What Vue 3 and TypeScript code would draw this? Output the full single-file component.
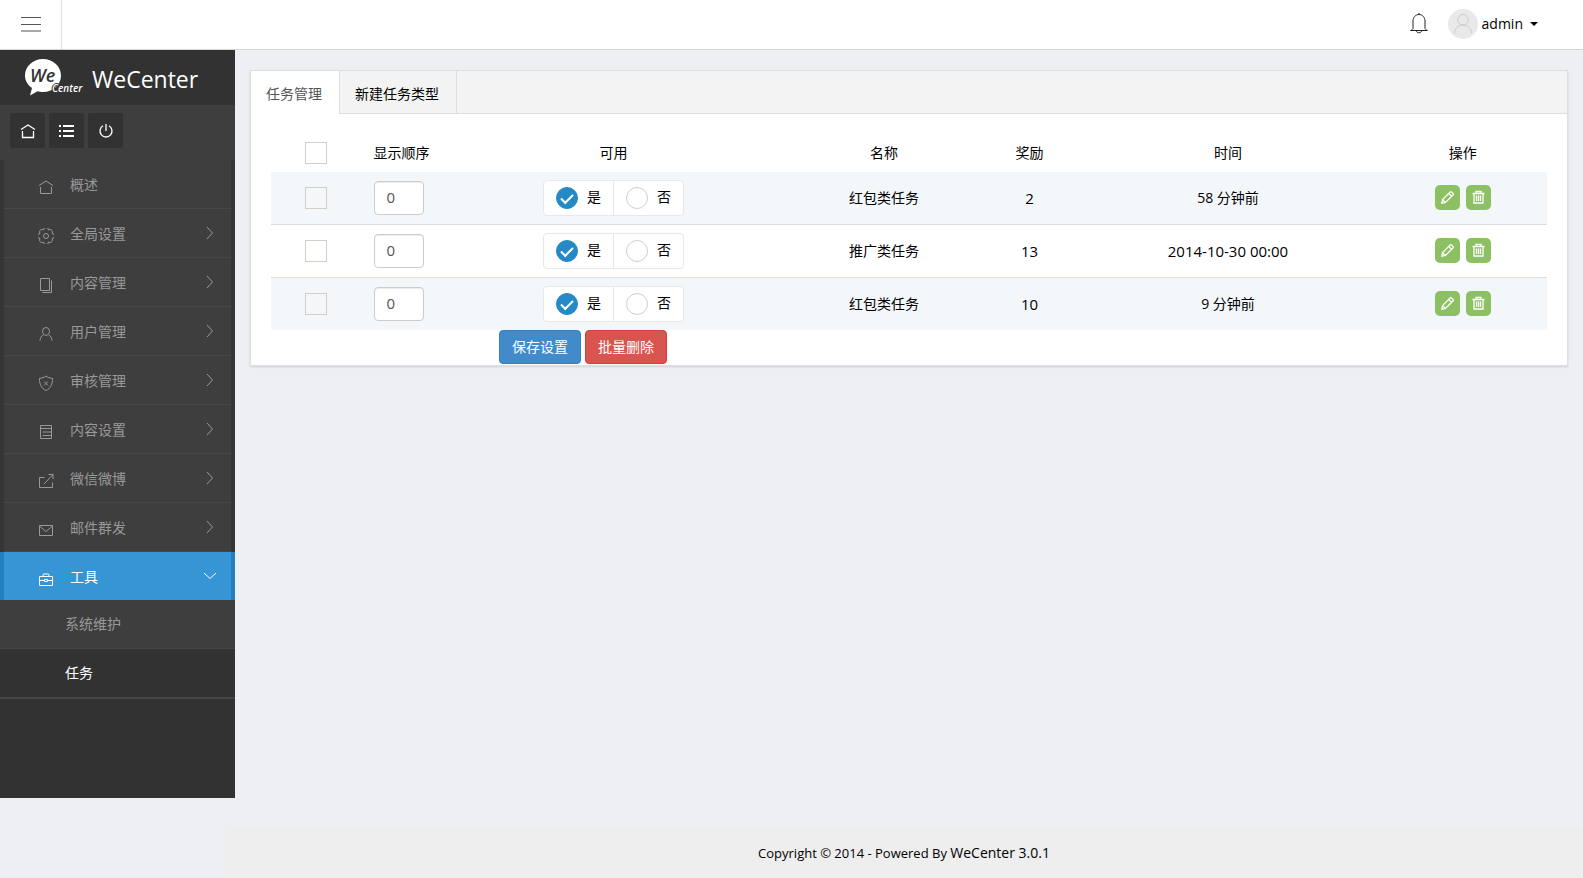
<script setup lang="ts">
import { ref } from 'vue'

interface MenuItem {
  label: string
  icon: string
  expandable: boolean
}

interface Task {
  id: number
  order: string
  enabled: 'yes' | 'no'
  name: string
  reward: string
  time: string
  checked: boolean
}

const icons: Record<string, string> = {
  home: 'M1 6.5 8 2l7 4.5M2.5 8v6.5h11V8',
  gear: 'M14 10.5A2.5 2.5 0 0 1 10.5 14A2.5 2.5 0 0 1 5.500 14A2.500 2.500 0 0 1 2 10.500A2.500 2.500 0 0 1 2 5.500A2.500 2.500 0 0 1 5.500 2A2.500 2.500 0 0 1 10.500 2A2.500 2.500 0 0 1 14 5.500A2.500 2.500 0 0 1 14 10.500zM8 5.500a2.500 2.500 0 1 0 0 5 2.500 2.500 0 1 0 0-5z',
  pages: 'M2.500 1.500h9v12h-9zM13.500 3.500v12h-9',
  user: 'M8 1.500a3.500 3.800 0 0 1 3.500 3.800c0 2-1.500 4-3.500 4s-3.500-2-3.500-4A3.500 3.800 0 0 1 8 1.500zM5.500 8.800c-2 1-3.500 3-3.500 6M10.500 8.800c2 1 3.500 3 3.500 6',
  shield: 'M8 1c1.800 1.500 4 2.200 6.500 2.300C14.800 9 12.500 13.500 8 15.500 3.500 13.500 1.200 9 1.500 3.300 4 3.200 6.200 2.500 8 1zM6 6.500l4 4M10 6.500l-4 4',
  list: 'M2.500 1.500h11v13h-11zM2.500 4.500h11M4.500 8h9M4.500 11.500h9',
  share: 'M6.500 4.500h-5v10h13v-5M6 11l9-9.500M10.500 1.500h4.500v4.500',
  mail: 'M1.500 3.500h13v10h-13zM1.500 4l6.500 5.500L14.500 4',
  toolbox: 'M1.500 5.500h13v9h-13zM4.500 5.500l1-2.500h5l1 2.500M1.500 9.500h4.500M10 9.500h4.500M6.500 8.500h3v2h-3z',
}

const menu: MenuItem[] = [
  { label: '概述', icon: 'home', expandable: false },
  { label: '全局设置', icon: 'gear', expandable: true },
  { label: '内容管理', icon: 'pages', expandable: true },
  { label: '用户管理', icon: 'user', expandable: true },
  { label: '审核管理', icon: 'shield', expandable: true },
  { label: '内容设置', icon: 'list', expandable: true },
  { label: '微信微博', icon: 'share', expandable: true },
  { label: '邮件群发', icon: 'mail', expandable: true },
]

const tasks = ref<Task[]>([
  { id: 1, order: '0', enabled: 'yes', name: '红包类任务', reward: '2', time: '58 分钟前', checked: false },
  { id: 2, order: '0', enabled: 'yes', name: '推广类任务', reward: '13', time: '2014-10-30 00:00', checked: false },
  { id: 3, order: '0', enabled: 'yes', name: '红包类任务', reward: '10', time: '9 分钟前', checked: false },
])

const allChecked = ref(false)

function toggleAll(): void {
  tasks.value.forEach((task) => {
    task.checked = allChecked.value
  })
}

function isNumeric(text: string): boolean {
  return /^[\d\s:-]+$/.test(text)
}
</script>

<template>
  <div class="page">
    <header class="topbar">
      <button class="toggle" type="button" aria-label="切换菜单">
        <svg width="20" height="16" viewBox="0 0 20 16"><path d="M0 1.500h20M0 8.500h20M0 15h20" /></svg>
      </button>
      <div class="account">
        <button class="bell" type="button" aria-label="通知">
          <svg width="18" height="22" viewBox="0 0 18 22">
            <path d="M9 1v2M.5 18.500h17M1 18.500l2-2V9c0-3.700 2.600-6.500 6-6.500s6 2.800 6 6.500v7.500l2 2M6.500 19c.3 2.300 4.700 2.300 5 0" />
          </svg>
        </button>
        <a class="profile" href="#profile">
          <svg class="avatar" width="30" height="30" viewBox="0 0 30 30">
            <circle cx="15" cy="15" r="15" />
            <path d="M15 5.500a5 5 0 1 1 0 10.500 5 5 0 1 1 0-10.500zM6.500 24.500c0-5 3.500-8.500 8.500-8.500s8.500 3.500 8.500 8.500" />
          </svg>
          <span>admin</span>
          <i class="caret"></i>
        </a>
      </div>
    </header>

    <div class="body">
      <aside class="sidebar">
        <a class="brand" href="#home">
          <svg width="58" height="38" viewBox="0 0 58 38">
            <path d="M18 0C27.500 0 36 7 36 16.500S28 33 18 33c-2 0-4-.3-5.500-.8L5 36.500l2-7.500C2.500 26 0 21.500 0 16.500 0 7 8.500 0 18 0z" fill="#fff" />
            <text class="logo-we" x="5" y="23">We</text>
            <text class="logo-center" x="27" y="33">Center</text>
          </svg>
          <span>WeCenter</span>
        </a>

        <div class="tools">
          <a href="#home" aria-label="首页">
            <svg width="16" height="16" viewBox="0 0 16 16"><path :d="icons.home" /></svg>
          </a>
          <a href="#list" aria-label="列表">
            <svg class="bold" width="16" height="16" viewBox="0 0 16 16"><path d="M0 3h2M4 3h11M0 8h2M4 8h11M0 13h2M4 13h11" /></svg>
          </a>
          <a href="#logout" aria-label="退出">
            <svg width="16" height="16" viewBox="0 0 16 16"><path d="M8 1v7M5 2.800a6 6 0 1 0 6 0" /></svg>
          </a>
        </div>

        <nav>
          <a v-for="item in menu" :key="item.label" class="item" href="#menu">
            <svg class="glyph" width="16" height="16" viewBox="0 0 16 16"><path :d="icons[item.icon]" /></svg>
            <span>{{ item.label }}</span>
            <svg v-if="item.expandable" class="chevron" width="14" height="14" viewBox="0 0 14 14"><path d="M4 1l5.500 6L4 13" /></svg>
          </a>
          <a class="item active" href="#tools">
            <svg class="glyph" width="16" height="16" viewBox="0 0 16 16"><path :d="icons.toolbox" /></svg>
            <span>工具</span>
            <svg class="chevron" width="14" height="14" viewBox="0 0 14 14"><path d="M1 4l6 5.500L13 4" /></svg>
          </a>
          <div class="submenu">
            <a href="#maintain">系统维护</a>
            <a class="current" href="#task">任务</a>
          </div>
        </nav>
      </aside>

      <main class="content">
        <section class="card">
          <div class="tabs">
            <a class="tab selected" href="#manage">任务管理</a>
            <a class="tab" href="#create">新建任务类型</a>
          </div>
          <form class="panel" @submit.prevent>
            <table>
              <colgroup>
                <col class="c-check" />
                <col class="c-order" />
                <col class="c-enabled" />
                <col class="c-name" />
                <col class="c-reward" />
                <col class="c-time" />
                <col class="c-action" />
              </colgroup>
              <thead>
                <tr>
                  <th><input v-model="allChecked" class="tick" type="checkbox" aria-label="全选" @change="toggleAll" /></th>
                  <th class="order">显示顺序</th>
                  <th>可用</th>
                  <th>名称</th>
                  <th>奖励</th>
                  <th>时间</th>
                  <th>操作</th>
                </tr>
              </thead>
              <tbody>
                <tr v-for="task in tasks" :key="task.id">
                  <td><input v-model="task.checked" class="tick" type="checkbox" :aria-label="task.name" /></td>
                  <td class="order"><input v-model="task.order" class="number" type="text" aria-label="显示顺序" /></td>
                  <td>
                    <div class="switch">
                      <label><input v-model="task.enabled" class="dot" type="radio" :name="`enabled-${task.id}`" value="yes" /><span>是</span></label>
                      <label><input v-model="task.enabled" class="dot" type="radio" :name="`enabled-${task.id}`" value="no" /><span>否</span></label>
                    </div>
                  </td>
                  <td>{{ task.name }}</td>
                  <td class="numeric">{{ task.reward }}</td>
                  <td :class="{ numeric: isNumeric(task.time) }">{{ task.time }}</td>
                  <td>
                    <div class="actions">
                      <button type="button" aria-label="编辑">
                        <svg width="15" height="15" viewBox="0 0 15 15">
                          <path d="M1.800 13.200l.8-3.700L10 2.100q.8-.8 1.600 0l1.300 1.300q.8.8 0 1.600L5.500 12.400zM8.800 3.500l2.700 2.700M2.600 9.700l2.700 2.700" />
                        </svg>
                      </button>
                      <button type="button" aria-label="删除">
                        <svg width="15" height="15" viewBox="0 0 15 15">
                          <path d="M1.500 3.500h12M5 3V1.500h5V3M3 3.500v9.500h9V3.500M5.500 5.500v5.500M7.500 5.500v5.500M9.500 5.500v5.500" />
                        </svg>
                      </button>
                    </div>
                  </td>
                </tr>
              </tbody>
            </table>
            <div class="buttons">
              <button class="save" type="submit">保存设置</button>
              <button class="remove" type="button">批量删除</button>
            </div>
          </form>
        </section>
      </main>
    </div>

    <footer class="footer">
      <span>Copyright © 2014 - Powered By <a href="#wecenter">WeCenter 3.0.1</a></span>
    </footer>
  </div>
</template>

<style>
body {
  margin: 0;
  background: #edeff3;
}
</style>

<style scoped>
.page {
  min-height: 100vh;
  display: flex;
  flex-direction: column;
  background: #edeff3;
  color: #000;
  font: 14px/20px "Open Sans", "Noto Sans CJK SC", sans-serif;
}
.page * {
  box-sizing: border-box;
}
a {
  color: inherit;
  text-decoration: none;
}
button {
  padding: 0;
  border: 0;
  font: inherit;
  cursor: pointer;
}
svg {
  flex: none;
  fill: none;
  stroke: currentColor;
  stroke-width: 1;
}

.topbar {
  height: 50px;
  display: flex;
  justify-content: space-between;
  background: #fff;
  border-bottom: 1px solid #d3d6d7;
}
.toggle {
  width: 62px;
  display: grid;
  place-items: center;
  padding-bottom: 2px;
  background: none;
  border-right: 1px solid #dfdfdf;
  color: #555;
}
.account {
  display: flex;
  align-items: center;
  gap: 20px;
  padding: 0 45px 1px 0;
}
.bell {
  display: flex;
  padding-bottom: 2px;
  background: none;
  color: #222;
}
.profile {
  display: flex;
  align-items: center;
  gap: 4px;
}
.avatar circle {
  fill: #e9e9e9;
  stroke: none;
}
.avatar path {
  stroke: #ccc;
}
.profile span {
  padding-bottom: 1px;
}
.caret {
  margin-left: 3px;
  border: 4px solid transparent;
  border-top-color: #000;
  border-bottom: 0;
}

.body {
  flex: 1;
  display: flex;
  align-items: flex-start;
  padding-bottom: 30px;
}
.sidebar {
  flex: none;
  width: 235px;
  min-height: calc(100vh - 130px);
  background: #323232;
}
.brand {
  height: 55px;
  display: flex;
  align-items: center;
  gap: 9px;
  padding: 1px 0 0 25px;
  color: #fff;
  font-size: 23px;
}
.brand span {
  padding-top: 1px;
}
.brand svg {
  stroke: none;
}
.logo-we {
  fill: #323232;
  font: italic 600 18px "Open Sans", sans-serif;
}
.logo-center {
  fill: #fff;
  stroke: #323232;
  stroke-width: 2;
  paint-order: stroke;
  font: italic 600 10px "Open Sans", sans-serif;
}
.tools {
  height: 55px;
  display: flex;
  align-items: center;
  gap: 4px;
  padding: 0 10px 4px;
  background: #3e3e3e;
}
.tools a {
  width: 35px;
  height: 35px;
  display: grid;
  place-items: center;
  padding: 1px 0 0 1px;
  border-radius: 3px;
  background: #323232;
  color: #fff;
}
.tools svg {
  stroke-width: 1.3;
}
.tools .bold {
  stroke-width: 2;
}
.item {
  height: 49px;
  display: flex;
  align-items: center;
  gap: 16px;
  padding: 0 14px 0 34px;
  border: solid #353535;
  border-width: 0 4px;
  background: linear-gradient(#3e3e3e 48px, #484848 48px);
  color: #999;
}
.item span {
  flex: 1;
  padding-top: 1px;
}
.glyph {
  margin-top: 5px;
}
.chevron {
  margin-top: -1px;
}
.item.active {
  height: 48px;
  border-color: #2180bf;
  background: #3695d5;
  color: #fff;
}
.submenu {
  border-bottom: 1px solid #464646;
}
.submenu a {
  height: 49px;
  display: flex;
  align-items: center;
  padding-left: 65px;
  border-bottom: 1px solid #464646;
  background: #3e3e3e;
  color: #999;
}
.submenu .current {
  background: #323232;
  color: #fff;
}

.content {
  flex: 1;
  min-width: 0;
  padding: 20px 15px;
}
.card {
  background: #fff;
  border: 1px solid #dedfe0;
  box-shadow: 0 1px 2px rgba(0, 0, 0, 0.12);
}
.tabs {
  height: 43px;
  display: flex;
  background: #f3f3f3;
  border-bottom: 1px solid #dedede;
}
.tab {
  height: 42px;
  padding: 13px 17px 0 15px;
  border-right: 1px solid #dedede;
}
.tab.selected {
  height: 43px;
  background: #fff;
  color: #555;
}
.panel {
  padding: 20px 20px 1px;
}
table {
  width: 100%;
  table-layout: fixed;
  border-collapse: separate;
  border-spacing: 0;
}
.c-check { width: 7.1%; }
.c-order { width: 6.2%; }
.c-enabled { width: 27.1%; }
.c-name { width: 15.3%; }
.c-reward { width: 7.5%; }
.c-time { width: 23.6%; }
.c-action { width: 13.2%; }
th,
td {
  padding: 0;
  height: 53px;
  text-align: center;
  font-weight: 400;
  white-space: nowrap;
}
th {
  height: 38px;
}
.order {
  padding-left: 12px;
  text-align: left;
}
.numeric {
  font-size: 15px;
}
tbody tr:nth-child(odd) {
  background: #f3f7fa;
}
tbody tr:not(:last-child) td {
  border-bottom: 1px solid #ddd;
}
tbody tr:last-child td {
  height: 52px;
}
.tick,
.dot {
  appearance: none;
  display: block;
  width: 22px;
  height: 22px;
  margin: 0 auto;
  border: 1px solid #d3cfc8;
}
.tick:checked {
  background: #2489c5;
}
.number {
  display: block;
  width: 50px;
  height: 34px;
  padding: 0 12px 2px;
  border: 1px solid #ccc;
  border-radius: 4px;
  background: #fff;
  box-shadow: inset 0 1px 1px rgba(0, 0, 0, 0.075);
  color: #555;
  font: inherit;
  font-size: 15px;
}
.switch {
  display: inline-flex;
  vertical-align: middle;
  height: 36px;
  border: 1px solid #e8e8e8;
  border-radius: 4px;
  background: #fff;
}
.switch label {
  display: flex;
  align-items: center;
  gap: 9px;
  padding: 0 12px;
}
.switch label + label {
  border-left: 1px solid #e8e8e8;
}
.switch span {
  padding-bottom: 2px;
}
.dot {
  display: grid;
  place-items: center;
  margin: 0;
  border-radius: 50%;
}
.dot:checked {
  border-color: #2489c5;
  background: #2489c5;
}
.dot:checked::after {
  content: "";
  width: 10px;
  height: 5px;
  border: solid #fff;
  border-width: 0 0 2px 2px;
  transform: translateY(-1px) rotate(-45deg);
}
.actions {
  display: flex;
  justify-content: center;
  gap: 6px;
  padding-bottom: 1px;
}
.actions button {
  width: 25px;
  height: 25px;
  display: grid;
  place-items: center;
  padding-bottom: 1px;
  border-radius: 5px;
  background: #8dc063;
  color: #fff;
}
.actions svg {
  stroke-width: 1.3;
}
.buttons {
  display: flex;
  gap: 4px;
  padding-left: 228px;
}
.buttons button {
  height: 34px;
  padding: 0 12px;
  border: 1px solid #357ebd;
  border-radius: 4px;
  background: #428bca;
  color: #fff;
}
.buttons .remove {
  border-color: #d43f3a;
  background: #d9534f;
}

.footer {
  height: 50px;
  display: flex;
  align-items: center;
  justify-content: center;
  margin-left: 225px;
  background: #eee;
  font-size: 13px;
}
.footer a {
  font-size: 14px;
}
</style>
